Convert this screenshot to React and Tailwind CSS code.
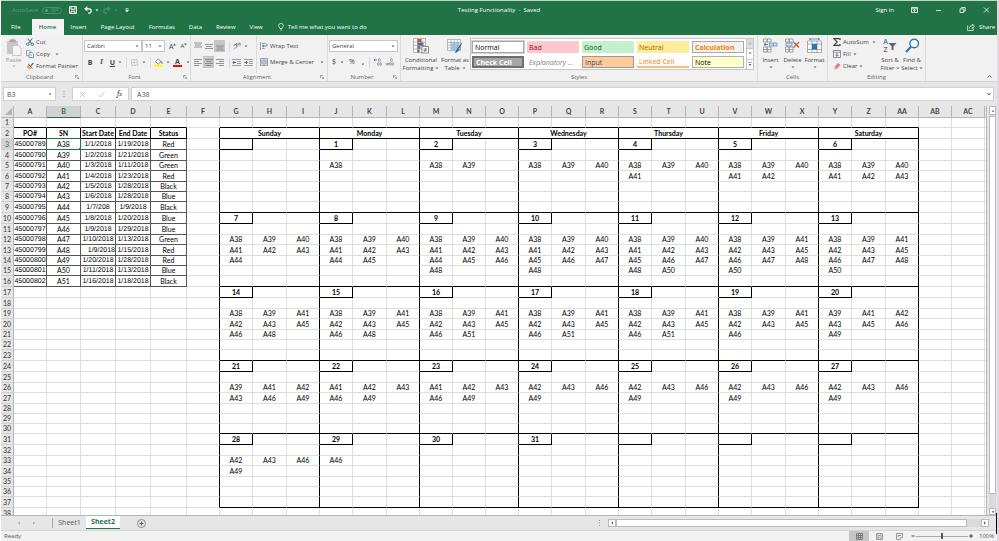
import React from "react";

const UI = "font-['Open_Sans',sans-serif]";

/* ---------- small drawing helpers ---------- */
function Svg({ w, h, children, className = "" }) {
  return (
    <svg width={w} height={h} viewBox={`0 0 ${w} ${h}`} fill="none" aria-hidden="true" className={`shrink-0 ${className}`}>
      {children}
    </svg>
  );
}
const Caret = ({ c = "#666" }) => (
  <Svg w={4} h={3}><path d="M0.5 0.5h3L2 2.3z" fill={c} /></Svg>
);
const Launcher = () => (
  <Svg w={4} h={4}><path d="M0.5 3V0.5H3M1.5 1.5l2 2M3.7 1.8v2h-2" stroke="#777" strokeWidth="0.6" /></Svg>
);

function Lines({ rows, w = 8, h = 9 }) {
  return (
    <Svg w={w} h={h}>
      {rows.map(([x1, x2, y]) => <path key={y} d={`M${x1} ${y}H${x2}`} stroke="#888" strokeWidth="0.9" />)}
    </Svg>
  );
}

/* ---------- sheet data ---------- */
const orders = [
  ["45000789", "A38", "1/1/2018", "1/19/2018", "Red"],
  ["45000790", "A39", "1/2/2018", "1/21/2018", "Green"],
  ["45000791", "A40", "1/3/2018", "1/11/2018", "Green"],
  ["45000792", "A41", "1/4/2018", "1/23/2018", "Red"],
  ["45000793", "A42", "1/5/2018", "1/28/2018", "Black"],
  ["45000794", "A43", "1/6/2018", "1/28/2018", "Blue"],
  ["45000795", "A44", "1/7/208", "1/9/2018", "Black"],
  ["45000796", "A45", "1/8/2018", "1/20/2018", "Blue"],
  ["45000797", "A46", "1/9/2018", "1/29/2018", "Blue"],
  ["45000798", "A47", "1/10/2018", "1/13/2018", "Green"],
  ["45000799", "A48", "1/9/2018", "1/15/2018", "Red"],
  ["45000800", "A49", "1/20/2018", "1/28/2018", "Red"],
  ["45000801", "A50", "1/11/2018", "1/13/2018", "Blue"],
  ["45000802", "A51", "1/16/2018", "1/18/2018", "Black"],
];
const days = ["Sunday", "Monday", "Tuesday", "Wednesday", "Thursday", "Friday", "Saturday"];
const weeks = [
  ["", "38", "38 39", "38 39 40", "38 39 40 41", "38 39 40 41 42", "38 39 40 41 42 43"],
  ["38 39 40 41 42 43 44", "38 39 40 41 42 43 44 45", "38 39 40 41 42 43 44 45 46 48", "38 39 40 41 42 43 45 46 47 48", "38 39 40 41 42 43 45 46 47 48 50", "38 39 41 42 43 45 46 47 48 50", "38 39 41 42 43 45 46 47 48 50"],
  ["38 39 41 42 43 45 46 48", "38 39 41 42 43 45 46 48", "38 39 41 42 43 45 46 51", "38 39 41 42 43 45 46 51", "38 39 41 42 43 45 46 51", "38 39 41 42 43 45 46", "39 41 42 43 45 46 49"],
  ["39 41 42 43 46 49", "41 42 43 46 49", "41 42 43 46 49", "42 43 46 49", "42 43 46 49", "42 43 46 49", "42 43 46 49"],
  ["42 43 46 49", "46", "", "", "", "", ""],
].map((week) => week.map((d) => (d ? d.split(" ").map((n) => "A" + n) : [])));

const letters = "A B C D E F G H I J K L M N O P Q R S T U V W X Y Z AA AB AC".split(" ");
const colWidths = [
  "w-[33px]", "w-[34px]", "w-[35px]", "w-[35px]", "w-[36px]", "w-[33px]",
  ...days.flatMap((_, i) => ["w-[33px]", i === 2 ? "w-[33px]" : "w-[34px]", "w-[33px]"]),
  "w-[33px]", "w-[33px]",
];
const tall = [true, true, false, true, false, false, true];

function cellText(row, col) {
  if (col < 5) {
    if (row === 2) return ["PO#", "SN", "Start Date", "End Date", "Status"][col];
    if (row >= 3 && row <= 16) return orders[row - 3][col];
    return "";
  }
  if (col < 6 || col > 26 || row < 3 || row > 37) return "";
  const week = Math.floor((row - 3) / 7);
  const line = (row - 3) % 7;
  const day = Math.floor((col - 6) / 3);
  const slot = (col - 6) % 3;
  if (line === 0) {
    const n = week * 7 + day;
    return slot === 0 && n >= 1 && n <= 31 ? String(n) : "";
  }
  return line >= 2 ? weeks[week][day][(line - 2) * 3 + slot] || "" : "";
}

function rightBorder(row, col) {
  if (col < 5 && row === 2) return "border-r-black";
  if (col < 5 && row >= 3 && row <= 16) return "border-r-[#555]";
  if (row >= 2 && row <= 37 && col >= 5 && col <= 26) {
    if ((col - 5) % 3 === 0) return "border-r-black";
    if (row >= 3 && (row - 3) % 7 === 0 && (col - 6) % 3 === 0) return "border-r-black";
  }
  return "border-r-[#dedede]";
}
function bottomBorder(row, col) {
  if (col < 5 && row <= 2) return "border-b-black";
  if (col < 5 && row <= 16) return "border-b-[#555]";
  if (col >= 6 && col <= 26 && row <= 37) {
    if (row === 1 || (row - 2) % 7 === 0) return "border-b-black";
    if (row >= 3 && (row - 3) % 7 === 0 && (col - 6) % 3 === 0) return "border-b-black";
  }
  return "border-b-[#dedede]";
}

function Sheet() {
  const rows = Array.from({ length: 38 }, (_, i) => i + 1);
  return (
    <table className="w-full table-fixed border-separate border-spacing-0 whitespace-nowrap bg-white text-center font-[Lato,sans-serif] text-[7px] leading-[9px] text-black">
      <colgroup>
        <col className="w-[13px]" />
        {colWidths.map((w, i) => <col key={i} className={w} />)}
        <col />
      </colgroup>
      <thead className="text-[#444]">
        <tr className="h-[12px]">
          <th className="border-b border-r border-[#b5b5b5] bg-[#e6e6e6]">
            <Svg w={7} h={7} className="ml-auto mr-px"><path d="M7 0v7H0z" fill="#b4b4b4" /></Svg>
          </th>
          {letters.map((l) => (
            <th key={l} scope="col" className={`border-b border-r font-bold ${l === "B" ? "border-b-[#217346] border-r-[#b5b5b5] bg-[#d2d2d2] text-[#217346]" : "border-[#b5b5b5] bg-[#e6e6e6]"}`}>{l}</th>
          ))}
          <th className="border-b border-[#b5b5b5] bg-[#e6e6e6]" />
        </tr>
      </thead>
      <tbody>
        {rows.map((row) => {
          const isTall = row === 2 || (row >= 3 && tall[(row - 3) % 7] && row !== 30);
          return (
            <tr key={row} className={isTall ? "h-[11px]" : "h-[10px]"}>
              <th scope="row" className={`border-b border-r border-b-[#d0d0d0] border-r-[#b5b5b5] font-normal ${row === 3 ? "bg-[#d2d2d2] text-[#217346]" : "bg-[#e6e6e6] text-[#333]"}`}>{row}</th>
              {letters.map((l, col) => {
                if (row === 2 && col >= 6 && col <= 26) {
                  if ((col - 6) % 3) return null;
                  return <td key={l} colSpan={3} className="border-b border-r border-black font-bold">{days[(col - 6) / 3]}</td>;
                }
                const selected = row === 3 && col === 1;
                const bold = row === 2 || (col > 5 && row >= 3 && (row - 3) % 7 === 0);
                const align = row === 13 && col === 2 ? "text-right" : "";
                const numeric = col === 0 || col === 2 || col === 3;
                const face = numeric && row > 2 ? "font-['Liberation_Sans',sans-serif] [text-rendering:geometricPrecision]" : "";
                return (
                  <td key={l} className={`border-b border-r ${rightBorder(row, col)} ${bottomBorder(row, col)} ${bold ? "font-bold" : ""} ${align} ${face} ${selected ? "relative" : ""}`}>
                    {cellText(row, col)}
                    {selected && (
                      <span className="absolute -inset-px border border-[#217346]">
                        <span className="absolute -bottom-px -right-px size-[2px] bg-[#217346]" />
                      </span>
                    )}
                  </td>
                );
              })}
              <td className="border-b border-[#dedede]" />
            </tr>
          );
        })}
      </tbody>
    </table>
  );
}

/* ---------- title bar and tabs ---------- */
function TitleBar() {
  return (
    <header className="grid h-[18px] grid-cols-[1fr_auto_1fr] items-center text-white">
      <div className="flex items-center gap-[7px] pl-[11px]">
        <div className="flex items-center gap-[4px] text-[#5f9c7b]">
          <span>AutoSave</span>
          <button className="flex h-[7px] w-[20px] items-center gap-[3px] rounded-full border border-[#4d8f6b] px-[2px] text-[5px] leading-none">
            <span className="size-[3px] rounded-full bg-[#5f9c7b]" />Off
          </button>
        </div>
        <button aria-label="Save"><Svg w={8} h={8}><path d="M0.6 0.6h6.8v6.8H0.6zM2 0.6v2.6h4V0.6M2.2 7.4V5.2h3.6v2.2" stroke="#fff" strokeWidth="1" /></Svg></button>
        <button aria-label="Undo" className="flex items-center gap-[3px]">
          <Svg w={8} h={8}><path d="M1 2.8h4a2.2 2.2 0 0 1 0 4.4H4" stroke="#fff" strokeWidth="1.2" /><path d="M3.4 0v5.4L0.2 2.8z" fill="#fff" /></Svg>
          <Caret c="#fff" />
        </button>
        <button aria-label="Redo" className="-ml-[3px] flex items-center gap-[3px]">
          <Svg w={8} h={8}><path d="M7 2.8H3a2.2 2.2 0 0 0 0 4.4h1" stroke="#4d8f6b" strokeWidth="1.2" /><path d="M4.6 0v5.4l3.2-2.6z" fill="#4d8f6b" /></Svg>
          <Caret c="#4d8f6b" />
        </button>
        <button aria-label="Customize toolbar"><Svg w={4} h={5}><path d="M0.5 0.5h3M0.5 2h3L2 4z" fill="#fff" stroke="#fff" strokeWidth="0.6" /></Svg></button>
      </div>
      <h1>Testing Functionality&nbsp; -&nbsp; Saved</h1>
      <div className="flex items-center justify-end gap-[17px] pr-[7px]">
        <button>Sign in</button>
        <button aria-label="Ribbon display options"><Svg w={7} h={6}><path d="M0.5 0.5h6v5h-6zM0.5 1.8h6M3.5 4.9V2.6M2.3 3.7l1.2-1.2 1.2 1.2" stroke="#fff" strokeWidth="0.8" /></Svg></button>
        <button aria-label="Minimize"><Svg w={7} h={6}><path d="M1 3.5h5" stroke="#fff" strokeWidth="0.8" /></Svg></button>
        <button aria-label="Restore"><Svg w={7} h={6}><path d="M1 1.9h3.7v3.6H1zM2.4 1.7V0.5h3.8v3.6H4.9" stroke="#fff" strokeWidth="0.8" /></Svg></button>
        <button aria-label="Close"><Svg w={7} h={6}><path d="M1 0.5l5 5M6 0.5l-5 5" stroke="#fff" strokeWidth="0.8" /></Svg></button>
      </div>
    </header>
  );
}

function RibbonTabs() {
  return (
    <nav className="flex h-[16px] items-stretch pl-px text-white">
      {["File", "Home", "Insert", "Page Layout", "Formulas", "Data", "Review", "View"].map((t) => (
        <button key={t} className={t === "Home" ? "ml-[4px] w-[32px] bg-[#f3f3f3] font-semibold text-[#217346]" : "px-[7px] first:pl-[9px]"}>{t}</button>
      ))}
      <button className="flex items-center gap-[4px] px-[8px]">
        <Svg w={6} h={8}><path d="M2 5.6C2 4.6 0.7 4.2 0.7 2.7a2.3 2.3 0 0 1 4.6 0C5.3 4.2 4 4.6 4 5.6zM2.1 7h1.8" stroke="#fff" strokeWidth="0.7" /></Svg>
        Tell me what you want to do
      </button>
      <button className="ml-auto flex items-center gap-[4px] pr-[2px]">
        <Svg w={8} h={8}><path d="M0.6 2.5v5h5.6V5.3M2.4 5.4c0-2 1.2-2.8 3-2.8V1l2 2.3-2 2.2V4" stroke="#fff" strokeWidth="0.7" /></Svg>
        Share
      </button>
    </nav>
  );
}

/* ---------- ribbon ---------- */
function Group({ label, width, launcher = true, children }) {
  return (
    <section aria-label={label} className={`flex shrink-0 flex-col border-r border-[#dadada] ${width}`}>
      <div className="flex h-[38px] shrink-0 pt-px">{children}</div>
      <div className="flex h-[8px] shrink-0 items-center px-[3px] text-[#666]">
        <span className="flex-1 text-center">{label}</span>
        {launcher && <button aria-label={`${label} settings`}><Launcher /></button>}
      </div>
    </section>
  );
}
function Picker({ label, options, width }) {
  return (
    <label className={`relative flex h-[12px] items-center border border-[#c6c6c6] bg-white ${width}`}>
      <select aria-label={label} className="h-full w-full appearance-none bg-transparent pl-[2px] text-[#444] outline-none">
        {options.map((o) => <option key={o}>{o}</option>)}
      </select>
      <span className="pointer-events-none absolute right-[2px]"><Caret /></span>
    </label>
  );
}
const Sep = () => <span className="h-[11px] w-px bg-[#dadada]" />;

function Clipboard() {
  return (
    <Group label="Clipboard" width="w-[82px]">
      <button className="flex w-[25px] flex-col items-center pt-[2px] text-[#999]">
        <Svg w={16} h={18}>
          <path d="M1 3h11v13H1z" fill="#c9c6cc" /><path d="M3.5 1.6h2a1.3 1.3 0 0 1 2.4 0h2v2.6H3.5z" fill="#aaa" />
          <path d="M6.5 7.5h6l2.5 2.5v7.5H6.5z" fill="#f6f4f7" stroke="#bbb" strokeWidth="0.8" />
        </Svg>
        <span className="leading-[9px]">Paste</span>
        <Caret c="#aaa" />
      </button>
      <div className="flex flex-col text-[#444]">
        <button className="flex h-[12px] items-center gap-[2px]">
          <Svg w={8} h={8}><path d="M1.8 0.4l3.6 5M6.2 0.4l-3.6 5" stroke="#555" strokeWidth="0.9" /><circle cx="1.8" cy="6.2" r="1.3" stroke="#2e75b6" strokeWidth="0.9" /><circle cx="6.2" cy="6.2" r="1.3" stroke="#2e75b6" strokeWidth="0.9" /></Svg>Cut
        </button>
        <button className="flex h-[12px] items-center gap-[2px]">
          <Svg w={8} h={8}><path d="M0.5 0.5h3L4.6 2v3.6H0.5z" fill="#fff" stroke="#777" strokeWidth="0.7" /><path d="M3 2.5h3L7.5 4v3.5H3z" fill="#fff" stroke="#2e75b6" strokeWidth="0.7" /><path d="M4 4.5h1.5M4 5.8h2.4" stroke="#2e75b6" strokeWidth="0.5" /></Svg>
          Copy<span className="pl-[3px]"><Caret /></span>
        </button>
        <button className="flex h-[12px] items-center gap-[2px]">
          <Svg w={8} h={8}><path d="M4.6 3.2L6.9 0.7l0.9 0.9-2.4 2.4z" fill="#555" /><path d="M2.2 2l4.2 4.1" stroke="#444" strokeWidth="1" /><path d="M2 2.8L5.4 6 4 7.7 0.4 5z" fill="#eaae50" /></Svg>Format Painter
        </button>
      </div>
    </Group>
  );
}

function FontGroup() {
  return (
    <Group label="Font" width="w-[108px]">
      <div className="flex flex-col gap-[4px] pl-px pt-[4px]">
        <div className="flex items-center">
          <Picker label="Font" options={["Calibri", "Arial"]} width="w-[58px]" />
          <Picker label="Font size" options={["11", "12"]} width="w-[23px]" />
          <button className="ml-[4px] flex text-[7px] leading-none text-[#444]">A<Svg w={3} h={3}><path d="M0 2.5L1.5 0.5 3 2.5z" fill="#2e75b6" /></Svg></button>
          <button className="ml-[4px] flex text-[6px] leading-none text-[#444]">A<Svg w={3} h={3}><path d="M0 0.5h3L1.5 2.5z" fill="#2e75b6" /></Svg></button>
        </div>
        <div className="flex h-[12px] items-center text-[#444]">
          <button className="w-[12px] text-[7px] font-bold leading-none">B</button>
          <button className="w-[11px] font-serif text-[7px] font-bold italic leading-none">I</button>
          <button className="w-[11px] text-[7px] font-bold leading-none underline">U</button>
          <button aria-label="Underline style" className="w-[8px]"><Caret /></button>
          <Sep />
          <button aria-label="Borders" className="flex items-center gap-[4px] px-[4px]">
            <Svg w={7} h={7}><path d="M0.5 0.5h6v6h-6zM3.5 0.5v6M0.5 3.5h6" stroke="#aaa" strokeWidth="0.7" strokeDasharray="1 0.5" /></Svg><Caret />
          </button>
          <Sep />
          <button aria-label="Fill colour" className="flex items-center gap-[3px] pl-[3px]">
            <Svg w={9} h={9}><path d="M1.5 3.6L4.3 1l2.8 2.6L4.3 6.2z" fill="#fff" stroke="#555" strokeWidth="0.7" /><path d="M7 3c1 .8 1.2 1.8 1 2.8" stroke="#2e75b6" strokeWidth="0.9" /><path d="M0 7h8.500v2H0z" fill="#ff0" /></Svg><Caret />
          </button>
          <button aria-label="Font colour" className="flex items-center gap-[4px] pl-[3px]">
            <span className="flex h-[9px] w-[9px] flex-col items-center border-b-2 border-[#f00] text-[7px] font-bold leading-[7px]">A</span><Caret />
          </button>
        </div>
      </div>
    </Group>
  );
}

function Alignment() {
  const indent = (dir) => (
    <Svg w={9} h={7}><path d="M0 0.5h9M5 2.500h4M5 4.500h4M0 6.500h9" stroke="#888" strokeWidth="0.8" /><path d={dir ? "M0.300 3.500h3M2 2l1.500 1.500L2 5" : "M4 3.500H1M2.300 2L0.800 3.500 2.300 5"} stroke="#2e75b6" strokeWidth="1" /></Svg>
  );
  return (
    <Group label="Alignment" width="w-[137px]">
      <div className="flex flex-col gap-[4px] pl-px pt-[4px]">
        <div className="flex h-[12px] items-center">
          <button aria-label="Top align" className="flex w-[11px] justify-center"><Lines rows={[[0, 8, 1], [1, 7, 3], [0, 8, 5]]} /></button>
          <button aria-label="Middle align" className="flex w-[11px] justify-center"><Lines rows={[[0, 8, 2.5], [1, 7, 4.5], [0, 8, 6.5]]} /></button>
          <button aria-label="Bottom align" className="flex h-[12px] w-[11px] items-center justify-center bg-[#c6c6c6]"><Lines rows={[[0, 8, 4], [1, 7, 6], [0, 8, 8]]} /></button>
          <span className="w-[4px]" /><Sep />
          <button aria-label="Orientation" className="flex items-center gap-[3px] pl-[3px]">
            <Svg w={8} h={8}><path d="M1 7.500L7 1.500M7.200 3.800V1.300H4.800" stroke="#777" strokeWidth="0.8" /><path d="M0.800 3.500l2-1.500 1 2.500M3.200 1l1.500 1.500" stroke="#444" strokeWidth="0.8" /></Svg><Caret />
          </button>
        </div>
        <div className="flex h-[12px] items-center">
          <button aria-label="Align left" className="flex w-[11px] justify-center"><Lines rows={[[0, 8, 1.5], [0, 5, 3.5], [0, 8, 5.5], [0, 5, 7.5]]} /></button>
          <button aria-label="Center" className="flex h-[12px] w-[11px] items-center justify-center bg-[#c6c6c6]"><Lines rows={[[0, 8, 1.5], [1.5, 6.5, 3.5], [0, 8, 5.5], [1.5, 6.5, 7.5]]} /></button>
          <button aria-label="Align right" className="flex w-[11px] justify-center"><Lines rows={[[0, 8, 1.5], [3, 8, 3.5], [0, 8, 5.5], [3, 8, 7.5]]} /></button>
          <span className="w-[4px]" /><Sep />
          <button aria-label="Decrease indent" className="pl-[2px]">{indent(false)}</button>
          <button aria-label="Increase indent" className="pl-[3px]">{indent(true)}</button>
        </div>
      </div>
      <div className="ml-auto flex flex-col gap-[4px] border-l border-[#dadada] pl-[3px] pr-[3px] pt-[4px] text-[#444]">
        <button className="flex h-[12px] items-center gap-[2px]">
          <Svg w={8} h={8}><path d="M0.500 0v8M2 1.500h3.500M2 6.500h2.500" stroke="#888" strokeWidth="0.8" /><path d="M2 4h4.300c1.300 0 1.300-2 0-2M4 2.700L2.600 4 4 5.300" stroke="#2e75b6" strokeWidth="0.8" /></Svg>Wrap Text
        </button>
        <button className="flex h-[12px] items-center gap-[2px]">
          <Svg w={8} h={8}><path d="M0.500 0.500h7v7h-7zM0.500 2.200h7M0.500 5.800h7M4 0.500v1.700M4 5.800v1.700" stroke="#888" strokeWidth="0.7" /><path d="M1.500 4h5M2.500 3.200L1.500 4l1 .8M5.500 3.200l1 .8-1 .8" stroke="#2e75b6" strokeWidth="0.6" /></Svg>
          Merge &amp; Center<span className="pl-[4px]"><Caret /></span>
        </button>
      </div>
    </Group>
  );
}

function NumberGroup() {
  return (
    <Group label="Number" width="w-[73px]">
      <div className="flex flex-col gap-[4px] pl-px pt-[4px]">
        <Picker label="Number format" options={["General", "Number"]} width="w-[69px]" />
        <div className="flex h-[12px] items-center text-[7px] text-[#444]">
          <button className="flex w-[18px] items-center gap-[4px] pl-[3px]">$<Caret /></button>
          <button className="w-[10px]">%</button>
          <button className="w-[12px] font-bold">,</button>
          <Sep />
          {[false, true].map((dec) => (
            <button key={String(dec)} aria-label={dec ? "Decrease decimal" : "Increase decimal"} className="pl-[3px]">
              <Svg w={9} h={8}>
                <path d={dec ? "M0.500 6h3M2.400 4.800L3.600 6 2.400 7.200" : "M4 2H1M2.200 0.800L1 2l1.200 1.200"} stroke="#2e75b6" strokeWidth="0.8" />
                <rect x="5.500" y="0.700" width="1.800" height="2.600" rx="0.800" stroke="#666" strokeWidth="0.6" />
                <rect x="4.500" y="4.700" width="1.600" height="2.600" rx="0.800" stroke="#666" strokeWidth="0.6" />
                <rect x="7" y="4.700" width="1.600" height="2.600" rx="0.800" stroke="#666" strokeWidth="0.6" />
              </Svg>
            </button>
          ))}
        </div>
      </div>
    </Group>
  );
}

const styleSwatches = [
  ["Normal", "border border-[#aaa] bg-white text-black outline outline-[#d0d0d0]"],
  ["Bad", "bg-[#ffc7ce] text-[#9c0006]"],
  ["Good", "bg-[#c6efce] text-[#006100]"],
  ["Neutral", "bg-[#ffeb9c] text-[#9c6500]"],
  ["Calculation", "border border-[#aaa] bg-[#f2f2f2] font-bold text-[#fa7d00]"],
  ["Check Cell", "border-2 border-[#6f6f6f] bg-[#a5a5a5] font-bold text-white"],
  ["Explanatory ...", "italic text-[#7f7f7f]"],
  ["Input", "border border-[#9a9a9a] bg-[#ffcc99] text-[#3f3f76]"],
  ["Linked Cell", "border-b-2 border-[#ffb870] text-[#fa7d00]"],
  ["Note", "border border-[#b2b2b2] bg-[#ffffcc] text-black"],
];

function Styles() {
  return (
    <Group label="Styles" width="w-[357px]" launcher={false}>
      <button className="flex w-[40px] flex-col items-center pt-[2px] leading-[8px] text-[#444]">
        <Svg w={16} h={16}>
          <path d="M0.500 0.500h12v14H0.500zM0.500 4h12M0.500 7.500h12M0.500 11h12M4.500 0.500v14M9 0.500v14" fill="#fff" stroke="#999" strokeWidth="0.700" />
          <path d="M4.500 1h4v3h-4zM4.500 8h3v3h-3z" fill="#d9532c" /><path d="M4.500 4.500h6v3h-6zM4.500 11.500h2v3h-2z" fill="#2e75b6" />
          <rect x="9" y="8.500" width="6.500" height="6.500" fill="#fff" stroke="#777" strokeWidth="0.800" /><path d="M10.500 11h3.500M10.500 12.800h3.500M13.300 9.800l-2 4" stroke="#444" strokeWidth="0.600" />
        </Svg>
        <span className="pt-[2px]">Conditional</span>
        <span className="flex items-center gap-[2px]">Formatting<Caret /></span>
      </button>
      <button className="flex w-[28px] flex-col items-center whitespace-nowrap pt-[2px] leading-[8px] text-[#444]">
        <Svg w={16} h={16}>
          <path d="M0.500 1.500h13v11H0.500z" fill="#fff" /><path d="M4 4.500h9.500v8H4z" fill="#b9d5ee" />
          <path d="M0.500 1.500h13v11H0.500zM0.500 4.500h13M0.500 7.200h13M0.500 9.900h13M4 1.500v11M7.200 1.500v11M10.400 1.500v11" stroke="#8ca3b8" strokeWidth="0.700" />
          <path d="M15.500 4L11 9.500l1.500 1.200z" fill="#555" /><path d="M10.800 9.800l1.700 1.400c-.6 2-2.500 3.600-5 3.800 1.600-1.200 1.500-4 3.300-5.200z" fill="#2e75b6" />
        </Svg>
        <span className="pt-[2px]">Format as</span>
        <span className="flex items-center gap-[2px]">Table<Caret /></span>
      </button>
      <div className="ml-px mt-[2px] flex h-[32px] border border-[#c6c6c6] bg-white">
        <div className="grid grid-cols-5 gap-x-[3px] gap-y-[3px] p-px pr-[2px] pt-[2px]">
          {styleSwatches.map(([name, look]) => (
            <button key={name} className={`flex h-[12px] w-[52px] items-center whitespace-nowrap px-[2px] text-left text-[7px] leading-none ${look}`}>{name}</button>
          ))}
        </div>
        <div className="flex w-[7px] flex-col border-l border-[#c6c6c6]">
          <button aria-label="Previous styles" className="flex flex-1 items-center justify-center bg-[#dcdcdc]"><Svg w={4} h={3}><path d="M0.500 2.300h3L2 0.500z" fill="#aaa" /></Svg></button>
          <button aria-label="Next styles" className="flex flex-1 items-center justify-center border-y border-[#c6c6c6]"><Caret /></button>
          <button aria-label="More styles" className="flex flex-1 items-center justify-center"><Svg w={4} h={5}><path d="M0.500 0.500h3" stroke="#666" strokeWidth="0.700" /><path d="M0.500 2h3L2 4z" fill="#666" /></Svg></button>
        </div>
      </div>
    </Group>
  );
}

function Cells() {
  const grid = "M0.500 1h3.700v3H0.500zM4.200 1h3.800v3H4.200zM0.500 9h3.700v5H0.500zM4.200 9h3.800v5H4.200zM0.500 11.500h7.500";
  const icons = {
    Insert: <><path d={grid} fill="#fff" stroke="#888" strokeWidth="0.800" /><path d="M6.500 5h7.500v3H6.500zM10.200 5v3" fill="#cfe2f3" stroke="#5b8fbf" strokeWidth="0.800" /><path d="M5 6.500H1M2.600 5L1 6.500 2.600 8" stroke="#2e75b6" strokeWidth="1" /></>,
    Delete: <><path d={grid} fill="#fff" stroke="#888" strokeWidth="0.800" /><path d="M1 5h6v3H1z" fill="#cfe2f3" stroke="#5b8fbf" strokeWidth="0.800" /><path d="M8.500 4l5.500 5.500M14 4L8.500 9.500" stroke="#d9532c" strokeWidth="1.300" /></>,
    Format: <><path d="M0.500 3h14v11.500H0.500zM0.500 6h14M0.500 11.500h14M5 3v11.500M10 3v11.500" fill="#fff" stroke="#888" strokeWidth="0.700" /><path d="M5 6h5v5.500H5z" fill="#2e75b6" /><path d="M2.500 1h10M4 0L2.500 1 4 2M11 0l1.500 1L11 2" stroke="#2e75b6" strokeWidth="0.700" /></>,
  };
  return (
    <Group label="Cells" width="w-[70px]" launcher={false}>
      <div className="flex flex-1 justify-center gap-px pt-[2px] text-[#444]">
        {Object.entries(icons).map(([name, icon]) => (
          <button key={name} className="flex w-[21px] flex-col items-center leading-[8px]">
            <Svg w={15} h={16}>{icon}</Svg>
            <span className="pb-[2px] pt-[2px]">{name}</span>
            <Caret />
          </button>
        ))}
      </div>
    </Group>
  );
}

function Editing() {
  return (
    <Group label="Editing" width="w-[98px]" launcher={false}>
      <div className="flex w-[51px] shrink-0 flex-col pl-[5px] text-[#444]">
        <button className="flex h-[12px] items-center gap-[2px]"><Svg w={8} h={8}><path d="M7 2V0.700H1L4.200 4 1 7.300h6V6" stroke="#444" strokeWidth="1.200" /></Svg>AutoSum<span className="pl-px"><Caret /></span></button>
        <button className="flex h-[12px] items-center gap-[2px]"><Svg w={8} h={8}><path d="M0.500 0.500h7v7h-7zM0.500 2.200h7" fill="#fff" stroke="#777" strokeWidth="0.800" /><path d="M4 2.800v3.500M2.400 4.800L4 6.400l1.600-1.600" stroke="#2e75b6" strokeWidth="1" /></Svg>Fill<Caret /></button>
        <button className="flex h-[12px] items-center gap-[2px]"><Svg w={8} h={8}><path d="M4.800 1l2.700 1.700-3.300 4L1.500 5z" fill="#e8788f" /><path d="M1.500 5l2.700 1.700-.8.900H1.600L0.600 6.200z" fill="#f2aab8" /></Svg>Clear<Caret /></button>
      </div>
      <button className="flex w-[22px] flex-col items-center pt-[2px] leading-[8px] text-[#444]">
        <span className="flex h-[16px] items-center">
          <span className="flex flex-col text-[7px] font-semibold leading-[8px]"><span className="text-[#2e75b6]">A</span><span className="text-[#8e44ad]">Z</span></span>
          <Svg w={9} h={9}><path d="M0.500 1h8L5.500 4.500V8.500l-2-1V4.500z" fill="#666" /></Svg>
        </span>
        <span className="whitespace-nowrap pt-[2px]">Sort &amp;</span>
        <span className="flex items-center gap-px">Filter<Caret /></span>
      </button>
      <button className="flex w-[22px] flex-col items-center pt-[2px] leading-[8px] text-[#444]">
        <Svg w={15} h={16}><circle cx="9.200" cy="5.500" r="4.300" fill="#fff" stroke="#2e75b6" strokeWidth="1.400" /><path d="M6 8.800L1 14" stroke="#2e75b6" strokeWidth="2" /></Svg>
        <span className="whitespace-nowrap pt-[2px]">Find &amp;</span>
        <span className="flex items-center gap-px">Select<Caret /></span>
      </button>
    </Group>
  );
}

function FormulaBar() {
  return (
    <div className="flex h-[24px] items-center bg-[#e6e6e6] pl-[2px] pr-[3px] text-[7px] text-[#555]">
      <div className="flex h-[14px] w-[53px] items-center border border-[#cfcfcf] bg-white pr-[3px]">
        <input aria-label="Name box" defaultValue="B3" className="h-full w-full min-w-0 bg-transparent pl-[3px] outline-none" />
        <Caret />
      </div>
      <Svg w={16} h={8}><path d="M8 1v1M8 3.500v1M8 6v1" stroke="#999" strokeWidth="1" /></Svg>
      <div className="flex h-[14px] w-[57px] items-center justify-around border border-[#cfcfcf] bg-white">
        <button aria-label="Cancel"><Svg w={7} h={7}><path d="M1 1l5 5M6 1L1 6" stroke="#bbb" strokeWidth="0.800" /></Svg></button>
        <button aria-label="Enter"><Svg w={7} h={7}><path d="M0.500 3.800L2.500 6 6.500 1" stroke="#bbb" strokeWidth="0.800" /></Svg></button>
        <button className="font-serif text-[8px] italic leading-none text-[#333]">f<span className="text-[6px]">x</span></button>
      </div>
      <div className="ml-[2px] flex h-[14px] flex-1 items-center border border-[#cfcfcf] bg-white pr-[2px]">
        <input aria-label="Formula" defaultValue="A38" className="h-full flex-1 bg-transparent pl-[5px] outline-none" />
        <Svg w={4} h={4}><path d="M0.500 1L2 3l1.500-2" stroke="#555" strokeWidth="0.900" /></Svg>
      </div>
    </div>
  );
}

function ScrollArrow({ d, label, className }) {
  return (
    <button aria-label={label} className={`flex shrink-0 items-center justify-center border border-[#b9b9b9] bg-white ${className}`}>
      <Svg w={4} h={4}><path d={d} fill="#666" /></Svg>
    </button>
  );
}

export default function App() {
  return (
    <div className={`relative flex h-screen flex-col overflow-hidden border-l border-r-2 border-l-white border-r-[#e4d6e0] bg-[#e6e6e6] text-[6px] leading-[8px] ${UI}`}>
      <div className="border-t border-[#bcd6c7] bg-[#217346]">
        <TitleBar />
        <RibbonTabs />
      </div>

      <div className="flex h-[47px] shrink-0 border-b border-[#d4d4d4] bg-[#f1f1f1]">
        <Clipboard />
        <FontGroup />
        <Alignment />
        <NumberGroup />
        <Styles />
        <Cells />
        <Editing />
        <button aria-label="Collapse ribbon" className="ml-auto self-end pb-[3px] pr-[5px]"><Svg w={5} h={3}><path d="M0.500 2.500l2-2 2 2" stroke="#555" strokeWidth="0.900" /></Svg></button>
      </div>

      <FormulaBar />

      <main className="flex min-h-0 flex-1">
        <div className="min-w-0 flex-1 overflow-hidden border-r border-[#b5b5b5]"><Sheet /></div>
        <div className="ml-[2px] mr-px flex w-[7px] flex-col gap-px bg-[#dadada]">
          <ScrollArrow label="Scroll up" d="M0.500 2.800h3L2 1z" className="h-[9px]" />
          <div className="flex-1 border border-[#b9b9b9] bg-white" />
          <div className="h-[12px]" />
          <ScrollArrow label="Scroll down" d="M0.500 1.200h3L2 3z" className="h-[7px]" />
        </div>
      </main>

      <div className="flex h-[15px] shrink-0 items-stretch border-t border-[#b5b5b5] bg-[#e6e6e6] text-[#555]">
        <div className="my-[2px] flex w-[52px] items-center justify-center gap-[11px] border-r border-[#aaa]">
          <button aria-label="Previous sheet"><Svg w={4} h={4}><path d="M3 0.500v3L1 2z" fill="#aaa" /></Svg></button>
          <button aria-label="Next sheet"><Svg w={4} h={4}><path d="M1 0.500v3L3 2z" fill="#aaa" /></Svg></button>
        </div>
        <button className="w-[33px] text-[7px]">Sheet1</button>
        <button className="mb-px w-[34px] border-b border-[#217346] bg-white text-[7px] font-bold text-[#217346]">Sheet2</button>
        <button aria-label="New sheet" className="ml-[17px]"><Svg w={9} h={9}><circle cx="4.500" cy="4.500" r="4" stroke="#777" strokeWidth="0.800" /><path d="M4.500 2.500v4M2.500 4.500h4" stroke="#555" strokeWidth="0.900" /></Svg></button>
        <div className="ml-auto flex w-[402px] items-center pr-[2px]">
          <Svg w={9} h={8} className="mr-[4px]"><path d="M4.500 1v1M4.500 3.500v1M4.500 6v1" stroke="#999" strokeWidth="1" /></Svg>
          <ScrollArrow label="Scroll left" d="M3 0.500v3L1 2z" className="h-[8px] w-[8px]" />
          <div className="flex h-[8px] flex-1 bg-[#dadada]"><div className="mr-[14px] flex-1 border border-[#b9b9b9] bg-white" /></div>
          <ScrollArrow label="Scroll right" d="M1 0.500v3L3 2z" className="mr-[6px] h-[8px] w-[8px]" />
        </div>
      </div>

      <footer className="flex h-[11px] shrink-0 items-center border-t border-[#d4d4d4] bg-[#f1f1f1] pl-[3px] text-[#555]">
        <span>Ready</span>
        <div className="ml-auto flex items-center self-stretch">
          <button aria-label="Normal view" className="flex h-full w-[20px] items-center justify-center bg-[#c6c6c6]"><Svg w={7} h={7}><path d="M0.500 0.500h6v6h-6zM2.500 0.500v6M4.500 0.500v6M0.500 2.500h6M0.500 4.500h6" stroke="#666" strokeWidth="0.700" /></Svg></button>
          <button aria-label="Page layout view" className="flex w-[20px] justify-center"><Svg w={7} h={7}><path d="M0.500 0.500h6v6h-6zM2 0.500v6M5 0.500v6M2.500 2.500h2M2.500 4.500h2" stroke="#777" strokeWidth="0.700" /></Svg></button>
          <button aria-label="Page break view" className="flex w-[20px] justify-center"><Svg w={7} h={7}><path d="M0.500 0.500h6v4h-2v2h-4zM2 4.500V2.500h3" stroke="#777" strokeWidth="0.700" /></Svg></button>
          <button aria-label="Zoom out" className="ml-px px-px"><Svg w={4} h={4}><path d="M0.500 2h3" stroke="#444" strokeWidth="1" /></Svg></button>
          <input aria-label="Zoom" type="range" min="10" max="190" defaultValue="100" className="h-px w-[52px] appearance-none bg-[#aaa] [&::-webkit-slider-thumb]:h-[6px] [&::-webkit-slider-thumb]:w-[2px] [&::-webkit-slider-thumb]:appearance-none [&::-webkit-slider-thumb]:bg-[#555]" />
          <button aria-label="Zoom in" className="px-px"><Svg w={4} h={4}><path d="M0 2h4M2 0v4" stroke="#444" strokeWidth="1" /></Svg></button>
          <span className="w-[23px] pl-[5px]">100%</span>
        </div>
      </footer>
      <div className="absolute bottom-[7px] -right-[2px] h-[21px] w-[3px] bg-black" />
    </div>
  );
}
